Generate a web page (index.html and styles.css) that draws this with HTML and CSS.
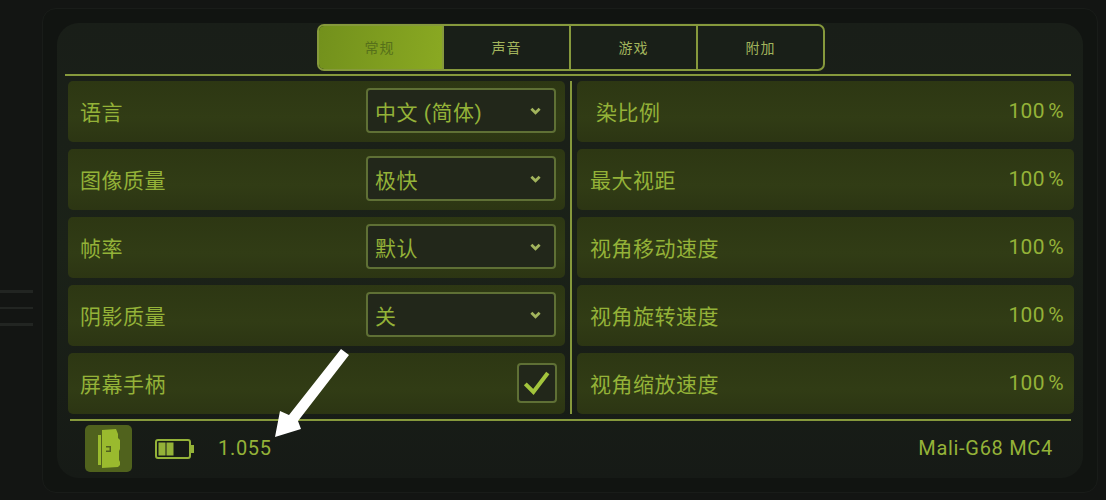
FILE: index.html
```html
<!DOCTYPE html>
<html lang="zh-CN">
<head>
  <meta charset="UTF-8" />
  <meta name="viewport" content="width=device-width, initial-scale=1.0"/>
  <title>设置</title>
  <link rel="stylesheet" href="styles.css">
</head>
<body>

  <div class="grip">
    <span></span>
    <span></span>
    <span></span>
  </div>

  <div class="frame">
    <div class="panel">

      <div class="tabs">
        <div class="tab active">常规</div>
        <div class="tab">声音</div>
        <div class="tab">游戏</div>
        <div class="tab">附加</div>
      </div>
      <div class="line-top"></div>

      <div class="settings">
        <div class="col">
          <div class="row">
            <span>语言</span>
            <div class="select">中文 (简体)
              <svg class="chevron" viewBox="0 0 12 8"><path d="M1.500 1.500 6 6l4.500-4.500"/></svg>
            </div>
          </div>
          <div class="row">
            <span>图像质量</span>
            <div class="select">极快
              <svg class="chevron" viewBox="0 0 12 8"><path d="M1.500 1.500 6 6l4.500-4.500"/></svg>
            </div>
          </div>
          <div class="row">
            <span>帧率</span>
            <div class="select">默认
              <svg class="chevron" viewBox="0 0 12 8"><path d="M1.500 1.500 6 6l4.500-4.500"/></svg>
            </div>
          </div>
          <div class="row">
            <span>阴影质量</span>
            <div class="select">关
              <svg class="chevron" viewBox="0 0 12 8"><path d="M1.500 1.500 6 6l4.500-4.500"/></svg>
            </div>
          </div>
          <div class="row">
            <span>屏幕手柄</span>
            <div class="checkbox">
              <svg viewBox="0 0 40 40"><path d="M7 21l9 9L32 9"/></svg>
            </div>
          </div>
        </div>

        <div class="divider"></div>

        <div class="col right">
          <div class="row"><span class="cut">染比例</span><span class="pct">100 %</span></div>
          <div class="row"><span>最大视距</span><span class="pct">100 %</span></div>
          <div class="row"><span>视角移动速度</span><span class="pct">100 %</span></div>
          <div class="row"><span>视角旋转速度</span><span class="pct">100 %</span></div>
          <div class="row"><span>视角缩放速度</span><span class="pct">100 %</span></div>
        </div>
      </div>

      <div class="line-bottom"></div>

      <div class="footer">
        <div class="exit">
          <svg viewBox="0 0 47 47">
            <rect x="13" y="10" width="3" height="30" />
            <path d="M17 5 31 4l2 5v4l2 2v9l-1 2v9l1 2v3l-2 2-16 1z"/>
            <path class="hole" d="M21 21h5v6h-5v-1.500h3.500v-3H21z"/>
          </svg>
        </div>
        <svg class="battery" viewBox="0 0 39 20">
          <rect class="shell" x="1" y="1" width="34" height="18" rx="2"/>
          <rect class="cell" x="3.500" y="3.500" width="7" height="13"/>
          <rect class="cell" x="11.500" y="3.500" width="7" height="13"/>
          <rect class="cell" x="36" y="6" width="3" height="8"/>
        </svg>
        <span class="fps">1.055</span>
        <span class="gpu">Mali-G68 MC4</span>
      </div>

    </div>
  </div>

  <!-- annotation drawn over the screenshot -->
  <svg class="arrow" viewBox="0 0 85 95">
    <path d="M71 4 79 10 28 76l3 8L5 92l5-26 9 4z"/>
  </svg>

</body>
</html>
```

FILE: styles.css
```css
:root {
  --bg: #131513;
  --frame: #111411;
  --panel: #1a1f19;
  --row: #2e3814;
  --text: #94b238;
  --soft: #a2b45c;
  --line: #86993c;
  --box: #22271a;
  --box-line: #5f7035;
}

* {
  box-sizing: border-box;
}

html,
body {
  margin: 0;
  height: 500px;
  overflow: hidden;
}

body {
  display: flex;
  background: var(--bg);
  color: var(--text);
  font-family: Roboto, "Noto Sans CJK SC", sans-serif;
  position: relative;
}

.grip {
  width: 33px;
  margin: 290px 9px 0 0;
  display: flex;
  flex-direction: column;
  gap: 14px;
  height: 36px;
}

.grip span {
  height: 3px;
  background: #222522;
}

.frame {
  width: 1056px;
  height: 485px;
  margin-top: 8px;
  padding: 14px;
  background: var(--frame);
  border-radius: 14px;
  border: 1px solid #191c19;
}

.panel {
  height: 100%;
  padding: 1px 9px 0 11px;
  background: linear-gradient(#191e18, #1b2218 50%, #161a16);
  border-radius: 22px;
}

.tabs {
  display: flex;
  width: 508px;
  height: 47px;
  margin-left: 249px;
  border: 2px solid var(--line);
  border-radius: 7px;
  overflow: hidden;
  background: #191f18;
}

.tab {
  flex: 1;
  display: flex;
  align-items: center;
  justify-content: center;
  padding-bottom: 2px;
  font-size: 14px;
  letter-spacing: 1px;
  color: var(--soft);
  border-left: 2px solid var(--line);
}

.tab.active {
  border-left: none;
  background: linear-gradient(100deg, #72901c, #8aa922);
  color: #56701a;
  margin: -2px 0 -2px -2px;
}

.line-top {
  height: 2px;
  margin: 3px 3px 0 -3px;
  background: var(--line);
}

.settings {
  display: flex;
  margin-top: 5px;
}

.col {
  flex: 1;
  display: flex;
  flex-direction: column;
  gap: 7px;
}

.divider {
  width: 2px;
  margin: 0 5px;
  background: var(--line);
}

.row {
  height: 61px;
  display: flex;
  align-items: center;
  justify-content: space-between;
  padding: 0 10px 2px 12px;
  background: linear-gradient(#2d3713, #313c15 60%, #2c3513);
  border-radius: 5px;
  font-size: 21px;
  letter-spacing: 0.5px;
}

.right .row {
  padding-left: 13px;
}

.cut {
  margin-left: 6px;
}

.pct {
  font-size: 21px;
  letter-spacing: 0.3px;
  word-spacing: -2px;
}

.select {
  width: 190px;
  height: 45px;
  display: flex;
  align-items: center;
  justify-content: space-between;
  padding: 0 13px 0 7px;
  background: var(--box);
  border: 2px solid var(--box-line);
  border-radius: 4px;
  margin-right: -1px;
  letter-spacing: 0.5px;
}

.chevron {
  width: 11px;
  height: 8px;
}

.chevron path {
  fill: none;
  stroke: var(--soft);
  stroke-width: 3;
}

.checkbox {
  width: 40px;
  height: 40px;
  margin-right: -2px;
  background: var(--box);
  border: 2px solid var(--box-line);
  border-radius: 4px;
}

.checkbox svg {
  display: block;
  width: 100%;
  height: 100%;
}

.checkbox path {
  fill: none;
  stroke: #a3c53c;
  stroke-width: 4.500;
}

.line-bottom {
  height: 2px;
  margin: 5px 3px 0 2px;
  background: var(--line);
}

.footer {
  display: flex;
  align-items: center;
  padding: 4px 21px 0 17px;
  font-size: 20px;
  letter-spacing: 0.7px;
}

.fps {
  margin-bottom: 2px;
}

.exit {
  width: 47px;
  height: 47px;
  background: #50621d;
  border-radius: 5px;
}

.exit svg {
  display: block;
  fill: #9aba2e;
}

.exit .hole {
  fill: #50621d;
}

.battery {
  width: 39px;
  height: 20px;
  margin: 0 24px 0 23px;
}

.shell {
  fill: none;
  stroke: var(--text);
  stroke-width: 2;
}

.cell {
  fill: var(--text);
}

.gpu {
  margin-left: auto;
  margin-bottom: 2px;
}

.arrow {
  position: absolute;
  left: 270px;
  top: 345px;
  width: 85px;
  height: 95px;
}

.arrow path {
  fill: #fff;
}
```
